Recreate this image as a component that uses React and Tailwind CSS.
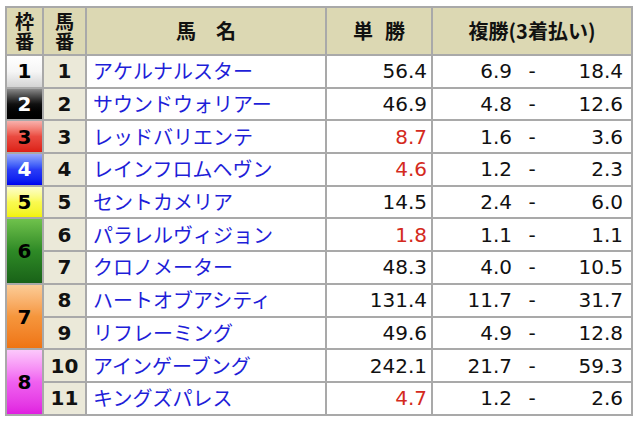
import React from "react";

const rows = [
  { w: 1, n: 1, name: "アケルナルスター", t: "56.4", a: "6.9", b: "18.4" },
  { w: 2, n: 2, name: "サウンドウォリアー", t: "46.9", a: "4.8", b: "12.6" },
  { w: 3, n: 3, name: "レッドバリエンテ", t: "8.7", red: true, a: "1.6", b: "3.6" },
  { w: 4, n: 4, name: "レインフロムヘヴン", t: "4.6", red: true, a: "1.2", b: "2.3" },
  { w: 5, n: 5, name: "セントカメリア", t: "14.5", a: "2.4", b: "6.0" },
  { w: 6, n: 6, name: "パラレルヴィジョン", t: "1.8", red: true, a: "1.1", b: "1.1", span: true },
  { w: null, n: 7, name: "クロノメーター", t: "48.3", a: "4.0", b: "10.5" },
  { w: 7, n: 8, name: "ハートオブアシティ", t: "131.4", a: "11.7", b: "31.7", span: true },
  { w: null, n: 9, name: "リフレーミング", t: "49.6", a: "4.9", b: "12.8" },
  { w: 8, n: 10, name: "アインゲーブング", t: "242.1", a: "21.7", b: "59.3", span: true },
  { w: null, n: 11, name: "キングズパレス", t: "4.7", red: true, a: "1.2", b: "2.6" },
];

const wakuStyle = {
  1: "bg-gradient-to-b from-[#ffffff] via-[#f6f6f6] to-[#d4d4d4] text-black",
  2: "bg-gradient-to-b from-[#8a8a8a] via-[#111111] to-[#000000] text-white",
  3: "bg-gradient-to-b from-[#f7b0ac] via-[#ea4a40] to-[#dc1e14] text-black",
  4: "bg-gradient-to-b from-[#9aa6fa] via-[#2a3cf6] to-[#0000ee] text-white",
  5: "bg-gradient-to-b from-[#fdfdc8] via-[#fafa50] to-[#f2f200] text-black",
  6: "bg-gradient-to-b from-[#6fc24c] via-[#2e8a26] to-[#196218] text-black",
  7: "bg-gradient-to-b from-[#fbcc96] via-[#f5963c] to-[#ef7410] text-black",
  8: "bg-gradient-to-b from-[#fbc8fb] via-[#f060f0] to-[#e01ee0] text-black",
};

const JP = "font-['Noto_Sans_CJK_JP',sans-serif]";
const NUM = "font-['DejaVu_Sans',sans-serif]";

export default function App() {
  return (
    <div className="w-[640px] h-[422px] bg-white pt-[6px] pl-[5px]">
      <div className="inline-grid grid-cols-[35px_41px_238px_104px_198px] grid-rows-[46px_repeat(11,30.7px)] gap-[2px] p-[2px] bg-[#a9a9a9]">
        <div className={`${JP} bg-[#dcd8b3] flex items-center justify-center text-center text-[19px] leading-[20px] font-bold text-[#111]`}>
          <p>枠<br />番</p>
        </div>
        <div className={`${JP} bg-[#dcd8b3] flex items-center justify-center text-center text-[19px] leading-[20px] font-bold text-[#111]`}>
          <p>馬<br />番</p>
        </div>
        <div className={`${JP} bg-[#dcd8b3] flex items-center justify-center text-[20px] font-bold text-[#111]`}>
          馬　名
        </div>
        <div className={`${JP} bg-[#dcd8b3] flex items-center justify-center gap-[12px] text-[20px] font-bold text-[#111]`}>
          <span>単</span>
          <span>勝</span>
        </div>
        <div className={`${JP} bg-[#dcd8b3] flex items-center justify-center text-[20px] font-bold text-[#111]`}>
          複勝(3着払い)
        </div>
        {rows.map((r) => (
          <React.Fragment key={r.n}>
            {r.w !== null && (
              <div
                className={`${NUM} ${wakuStyle[r.w]} ${r.span ? "row-span-2" : ""} flex items-center justify-center text-[20px] font-bold`}
              >
                {r.w}
              </div>
            )}
            <div className={`${NUM} bg-[#ebe9d9] flex items-center justify-center text-[20px] font-bold text-[#111]`}>
              {r.n}
            </div>
            <div className={`${JP} bg-white flex items-center pl-[6px] text-[20px] text-[#1e1ed8] whitespace-nowrap`}>
              {r.name}
            </div>
            <div
              className={`${NUM} bg-white flex items-center justify-end pr-[4px] text-[20px] ${r.red ? "text-[#d42a20]" : "text-[#111]"}`}
            >
              {r.t}
            </div>
            <div className={`${NUM} bg-white flex items-center text-[20px] text-[#111]`}>
              <span className="w-[79px] text-right">{r.a}</span>
              <span className="w-[40px] text-center">-</span>
              <span className="flex-1 text-right pr-[8px]">{r.b}</span>
            </div>
          </React.Fragment>
        ))}
      </div>
    </div>
  );
}
